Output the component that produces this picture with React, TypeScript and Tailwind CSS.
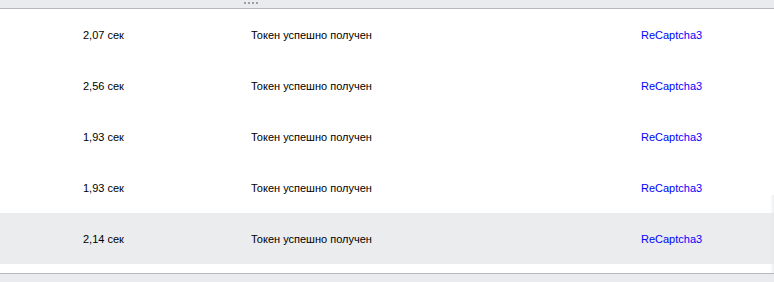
const rows = [
  { time: '2,07 сек', status: 'Токен успешно получен', kind: 'ReCaptcha3' },
  { time: '2,56 сек', status: 'Токен успешно получен', kind: 'ReCaptcha3' },
  { time: '1,93 сек', status: 'Токен успешно получен', kind: 'ReCaptcha3' },
  { time: '1,93 сек', status: 'Токен успешно получен', kind: 'ReCaptcha3' },
  { time: '2,14 сек', status: 'Токен успешно получен', kind: 'ReCaptcha3', active: true },
]

export default function App() {
  return (
    <div
      className="relative w-[774px] h-[282px] overflow-hidden bg-white text-[11px] text-black"
      style={{ fontFamily: '"Liberation Sans", Arial, sans-serif' }}
    >
      {/* Resize handle */}
      <div className="h-[8px] bg-[#e9ebee] border-b border-[#b5b9be] box-content flex justify-center items-start pl-[2px]">
        <div className="flex gap-[2px] mt-[2px] ml-[-274px]">
          <span className="w-[2px] h-[2px] bg-[#9ca1a7]" />
          <span className="w-[2px] h-[2px] bg-[#9ca1a7]" />
          <span className="w-[2px] h-[2px] bg-[#9ca1a7]" />
          <span className="w-[2px] h-[2px] bg-[#9ca1a7]" />
        </div>
      </div>

      {/* Log rows */}
      <div className="flex flex-col">
        {rows.map((r, i) => (
          <div
            key={i}
            className={`h-[51px] pt-[2px] flex items-center ${r.active ? 'bg-[#ebecee]' : ''}`}
          >
            <div className="w-[251px] pl-[83px]">{r.time}</div>
            <div className="w-[390px]">{r.status}</div>
            <div className="text-[#0000ff]">{r.kind}</div>
          </div>
        ))}
      </div>

      <div className="h-[9px]" />
      <div className="h-[9px] bg-[#e9ebee] border-t border-[#b5b9be]" />

      {/* Scrollbar shadow */}
      <div className="absolute right-0 top-[195px] bottom-[9px] w-[4px] bg-gradient-to-r from-transparent to-[#e6e7e9] opacity-70" />
    </div>
  )
}
